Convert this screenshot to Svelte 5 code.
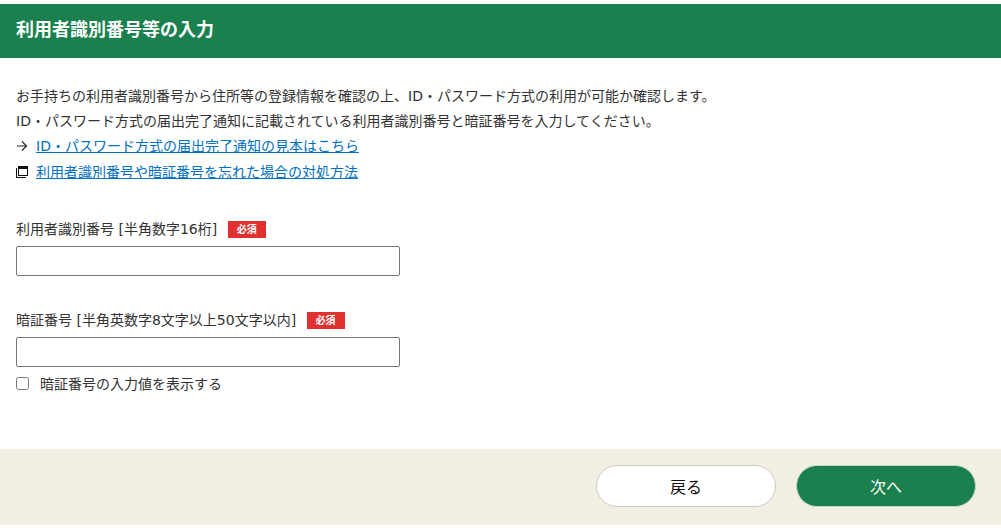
<script lang="ts">
    let showPassword = false;
</script>

<div class="page">
    <h1>利用者識別番号等の入力</h1>

    <main>
        <p>お手持ちの利用者識別番号から住所等の登録情報を確認の上、ID・パスワード方式の利用が可能か確認します。</p>
        <p>ID・パスワード方式の届出完了通知に記載されている利用者識別番号と暗証番号を入力してください。</p>
        <p class="link sample">
            <svg width="12" height="12" viewBox="0 0 12 12" fill="none" stroke="#222" stroke-width="1.1">
                <path d="M1 6H10.5M6 1.5 10.5 6 6 10.5" />
            </svg>
            <a href="#sample">ID・パスワード方式の届出完了通知の見本はこちら</a>
        </p>
        <p class="link">
            <svg class="window" width="12" height="12" viewBox="0 0 12 12" fill="none" stroke="#111">
                <path d="M0.5 2V11.5H10" />
                <rect x="2.5" y="0.5" width="9" height="9" />
                <path d="M2.5 2H11.5" stroke-width="2" />
            </svg>
            <a href="#forgot">利用者識別番号や暗証番号を忘れた場合の対処方法</a>
        </p>

        <div class="field first">
            <label for="user-id">利用者識別番号 [半角数字16桁]</label>
            <span class="required">必須</span>
            <input id="user-id" type="text" />
        </div>

        <div class="field second">
            <label for="password">暗証番号 [半角英数字8文字以上50文字以内]</label>
            <span class="required">必須</span>
            <input id="password" type={showPassword ? 'text' : 'password'} />
        </div>

        <label class="check">
            <input type="checkbox" bind:checked={showPassword} />
            <span>暗証番号の入力値を表示する</span>
        </label>
    </main>

    <footer>
        <button class="back">戻る</button>
        <button class="next">次へ</button>
    </footer>
</div>

<style>
    :global(body) {
        margin: 0;
        background: #fff;
        color: #333;
        font-family: "DejaVu Sans", "Noto Sans CJK JP", sans-serif;
        font-size: 14px;
    }

    .page {
        padding-top: 4px;
    }

    h1 {
        margin: 0;
        height: 54px;
        line-height: 52px;
        padding-left: 16px;
        background: #1a804e;
        color: #fff;
        font-size: 18px;
        font-weight: 700;
    }

    main {
        height: 391px;
        box-sizing: border-box;
        padding: 26px 16px 0;
    }

    p {
        margin: 0;
        height: 25px;
        line-height: 25px;
    }

    .link {
        display: flex;
        align-items: center;
        gap: 8px;
        height: 26px;
    }

    .sample {
        margin-top: -1px;
    }

    .link svg {
        flex: none;
    }

    .window {
        shape-rendering: crispEdges;
    }

    a {
        color: #0070c0;
    }

    .field label {
        line-height: 20px;
    }

    .field.first,
    .field.second {
        margin-top: 34px;
    }

    .required {
        display: inline-block;
        width: 38px;
        height: 17px;
        margin-left: 6px;
        line-height: 17px;
        text-align: center;
        vertical-align: 1px;
        background: #e03030;
        color: #fff;
        font-size: 10px;
        font-weight: 700;
    }

    input[type="text"],
    input[type="password"] {
        display: block;
        box-sizing: border-box;
        width: 384px;
        height: 30px;
        margin-top: 7px;
        border: 1px solid #767676;
        border-radius: 2px;
        background: #fff;
    }

    .check {
        display: flex;
        align-items: center;
        gap: 11px;
        margin-top: 6px;
        height: 20px;
    }

    .check input {
        width: 13px;
        height: 13px;
        margin: 0;
    }

    footer {
        display: flex;
        justify-content: flex-end;
        gap: 20px;
        height: 76px;
        box-sizing: border-box;
        padding: 16px 25px 0 0;
        background: #f1eee4;
    }

    button {
        width: 180px;
        height: 42px;
        box-sizing: border-box;
        border-radius: 21px;
        font-family: inherit;
        font-size: 16px;
    }

    .back {
        background: #fff;
        border: 1px solid #d3c9be;
        color: #111;
    }

    .next {
        background: #1a804e;
        border: 1px solid #c8d4c4;
        color: #fff;
    }
</style>
